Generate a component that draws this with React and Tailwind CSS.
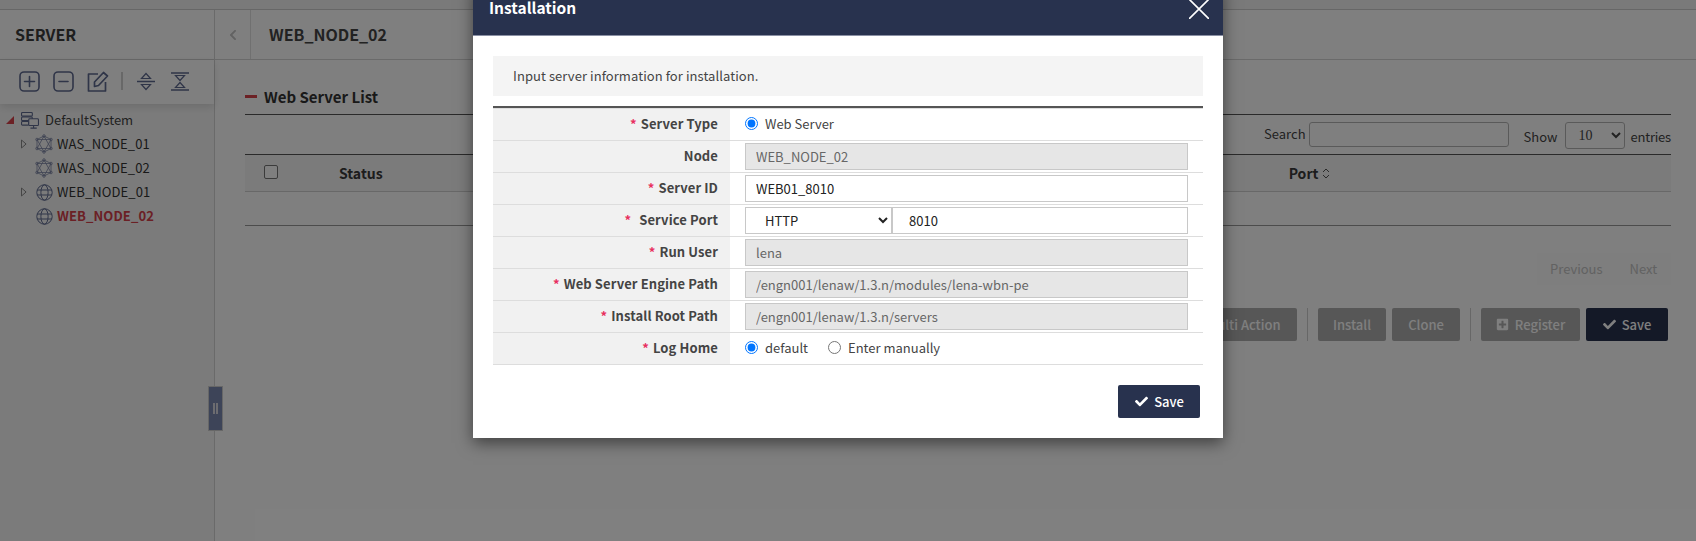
import React from "react";
import { FaCheck, FaPlusSquare, FaChevronLeft } from "react-icons/fa";

const ICON = "#5f6a90";

function SquareIcon({ children }) {
  return (
    <svg width="21" height="21" viewBox="0 0 21 21" fill="none" stroke={ICON} strokeWidth="1.6" strokeLinecap="round">
      <rect x="1" y="1" width="19" height="19" rx="4" />
      {children}
    </svg>
  );
}

function EditIcon() {
  return (
    <svg width="22" height="21" viewBox="0 0 22 21" fill="none" stroke={ICON} strokeWidth="1.7" strokeLinejoin="round">
      <path d="M11 3H1.5v17h17v-9" />
      <path d="M7.5 11 16.5 1.5l4 3.5-9 9.5-4 1z" />
    </svg>
  );
}

function SpreadIcon() {
  return (
    <svg width="20" height="19" viewBox="0 0 20 19" fill="none" stroke={ICON} strokeWidth="1.2">
      <path d="M1 9.5h18" strokeWidth="1.5" />
      <path d="M10 1.5l4.5 5h-9z" />
      <path d="M10 17.5l4.5-5h-9z" />
    </svg>
  );
}

function HourglassIcon() {
  return (
    <svg width="20" height="19" viewBox="0 0 20 19" fill="none" stroke={ICON} strokeWidth="1.2">
      <path d="M1 1h18M1 18h18" strokeWidth="1.5" />
      <path d="M10 8.5L5.5 3.5h9z" />
      <path d="M10 10.5l4.5 5h-9z" />
    </svg>
  );
}

function ServerIcon() {
  return (
    <svg width="20" height="19" viewBox="0 0 20 19" fill="none" stroke={ICON} strokeWidth="1.2">
      <rect x="0.6" y="0.6" width="12" height="4" rx="1" />
      <rect x="0.6" y="5.6" width="12" height="4" rx="1" />
      <rect x="0.6" y="10.6" width="8" height="4" rx="1" />
      <rect x="8.6" y="7.6" width="10.8" height="7.5" rx="1" fill="#f7f7f7" />
      <path d="M14 15v2.5M10.5 18h7" />
    </svg>
  );
}

function WasIcon() {
  return (
    <svg width="18" height="20" viewBox="0 0 18 20" fill="none" stroke="#7d86a6" strokeWidth="0.8">
      <path d="M9 2 16 14.5H2z" />
      <path d="M9 18 2 5.5h14z" />
      <circle cx="9" cy="2" r="1.3" />
      <circle cx="9" cy="18" r="1.3" />
      <circle cx="2" cy="5.5" r="1.3" />
      <circle cx="16" cy="5.5" r="1.3" />
      <circle cx="2" cy="14.5" r="1.3" />
      <circle cx="16" cy="14.5" r="1.3" />
      <path d="M9 2 16 5.5v9L9 18 2 14.5v-9z" />
    </svg>
  );
}

function GlobeIcon() {
  return (
    <svg width="17" height="17" viewBox="0 0 17 17" fill="none" stroke={ICON} strokeWidth="1">
      <circle cx="8.5" cy="8.5" r="7.7" />
      <ellipse cx="8.5" cy="8.5" rx="3.6" ry="7.7" />
      <path d="M1 6h15M1 11h15" />
    </svg>
  );
}

function TreeRow({ label, icon, arrow, active, indent }) {
  return (
    <div className="flex items-center h-6">
      <span className={indent ? "w-[35px] pl-[21px] flex items-center" : "w-[21px] pl-[6px] flex items-center"}>
        {arrow === "open" && (
          <svg width="8" height="8" viewBox="0 0 8 8"><path d="M8 0v8H0z" fill="#d9434a" /></svg>
        )}
        {arrow === "closed" && (
          <svg width="6" height="10" viewBox="0 0 6 10" fill="none" stroke="#8a8a8a"><path d="M0.5 1l4.6 4-4.6 4z" /></svg>
        )}
      </span>
      <span className="flex items-center w-[18px] h-6 justify-center shrink-0">{icon}</span>
      <span className={active ? "ml-1 text-[13px] tracking-[0.1px] font-bold text-[#d6404a]" : indent ? "ml-1 text-[13px] tracking-[0.1px] text-[#333]" : "ml-[6px] text-[13px] text-[#444]"}>{label}</span>
    </div>
  );
}

function FormRow({ label, required, children, wide }) {
  return (
    <div className="flex h-8 border-b border-[#dddddd]">
      <div className="w-[237px] shrink-0 bg-[#f1f1f1] flex items-center justify-end pr-3 pb-[2px] text-[13px] tracking-[0.1px] font-bold text-[#444]">
        {required && <span className={wide ? "text-[#e8305f] mr-[8px] font-bold" : "text-[#e8305f] mr-[4px] font-bold"}>*</span>}
        {label}
      </div>
      <div className="flex-1 flex items-center pl-[15px] pr-[15px]">{children}</div>
    </div>
  );
}

function Field({ value, disabled }) {
  return (
    <input
      readOnly
      value={value}
      className={
        disabled
          ? "w-full h-[27px] border border-[#c8c8c8] bg-[#e6e6e6] px-[10px] text-[13px] text-[#666] outline-none"
          : "w-full h-[27px] border border-[#c8c8c8] bg-white px-[10px] text-[13px] text-[#222] outline-none"
      }
    />
  );
}

function GrayButton({ children, className }) {
  return (
    <button className={"h-[33px] rounded-[2px] bg-[#aeaeae] text-white text-[13px] font-medium flex items-center justify-center " + className}>
      {children}
    </button>
  );
}

export default function App() {
  return (
    <div className="relative w-[1696px] h-[541px] overflow-hidden bg-white font-['Noto_Sans_CJK_KR','Noto_Sans',sans-serif]">
      <div className="h-[10px] bg-[#f4f4f4] border-b border-[#cfcfcf]" />
      <div className="flex h-[531px]">
        <aside className="relative w-[215px] shrink-0 border-r border-[#d4d4d4] bg-[#f7f7f7]">
          <div className="h-[50px] bg-white border-b border-[#cfcfcf] pl-[15px] pb-[2px] flex items-center text-base font-bold text-[#3c3c3c]">SERVER</div>
          <div className="h-[44px] bg-white shadow-[0_3px_8px_rgba(0,0,0,0.12)] flex items-center pl-[19px] pb-[2px]">
            <SquareIcon><path d="M10.5 5.5v10M5.5 10.5h10" /></SquareIcon>
            <span className="ml-[13px]"><SquareIcon><path d="M6 10.5h9" /></SquareIcon></span>
            <span className="ml-[13px]"><EditIcon /></span>
            <span className="ml-[12px] w-[2px] h-[18px] bg-[#d0d0d0]" />
            <span className="ml-[13px]"><SpreadIcon /></span>
            <span className="ml-[14px]"><HourglassIcon /></span>
          </div>
          <div className="pt-1">
            <TreeRow label="DefaultSystem" icon={<ServerIcon />} arrow="open" />
            <TreeRow label="WAS_NODE_01" icon={<WasIcon />} arrow="closed" indent />
            <TreeRow label="WAS_NODE_02" icon={<WasIcon />} indent />
            <TreeRow label="WEB_NODE_01" icon={<GlobeIcon />} arrow="closed" indent />
            <TreeRow label="WEB_NODE_02" icon={<GlobeIcon />} active indent />
          </div>
          <div className="absolute top-[376px] left-[208px] w-[15px] h-[45px] bg-[#7a88b0] border border-[#cfcfcf] flex items-center justify-center gap-px">
            <span className="w-[2px] h-[11px] bg-[#d8d8e0]" />
            <span className="w-[2px] h-[11px] bg-[#d8d8e0]" />
          </div>
        </aside>

        <main className="flex-1 min-w-0">
          <div className="h-[50px] border-b border-[#d4d4d4] flex items-center bg-white">
            <div className="w-[36px] h-full border-r border-[#e0e0e0] flex items-center justify-center text-[#c4c4c4] text-[12px]"><FaChevronLeft /></div>
            <div className="ml-[18px] pb-[2px] text-base font-bold text-[#444]">WEB_NODE_02</div>
          </div>

          <div className="pl-[30px] pr-[25px]">
            <div className="mt-[27px] h-[28px] flex items-center border-b border-[#555] pb-[9px]">
              <span className="w-3 h-[3px] bg-[#d9434a]" />
              <span className="ml-[7px] mt-[2px] text-[15px] font-bold text-[#333]">Web Server List</span>
            </div>

            <div className="h-[39px] flex justify-end pt-[7px] text-[13px] text-[#444]">
              <span className="mt-[2px]">Search</span>
              <input readOnly className="ml-[3px] w-[200px] h-[25px] border border-[#b5b5b5] rounded-[3px] bg-white" />
              <span className="ml-[15px] mt-[5px]">Show</span>
              <select className="ml-2 w-[60px] h-[27px] border border-[#b5b5b5] rounded-[3px] bg-white pl-2 text-sm font-['Liberation_Serif',serif]">
                <option>10</option>
              </select>
              <span className="ml-[5px] mt-[5px] tracking-[-0.2px]">entries</span>
            </div>

            <div className="h-[38px] border-t border-t-[#555] border-b border-b-[#d0d0d0] bg-[#f6f6f6] flex items-center text-sm font-bold text-[#3a3a3a]">
              <span className="ml-[19px] w-[14px] h-[14px] border border-[#777] rounded-[2px] bg-white -mt-[2px]" />
              <span className="ml-[61px]">Status</span>
              <span className="ml-[906px] flex items-center">
                Port
                <svg className="ml-1" width="8" height="11" viewBox="0 0 8 11" fill="none" stroke="#555" strokeWidth="1"><path d="M1 4l3-3 3 3M1 7l3 3 3-3" /></svg>
              </span>
            </div>
            <div className="h-[34px] border-b border-[#999]" />

            <div className="mt-[27px] flex justify-end text-[13px] text-[#c4c4c4]">
              <div className="h-[32px] w-[134px] bg-[#fcfcfc] flex items-center">
                <span className="ml-[13px]">Previous</span>
                <span className="ml-[27px]">Next</span>
              </div>
            </div>

            <div className="mt-[23px] flex justify-end items-center pr-[3px]">
              <GrayButton className="w-[107px]">Multi Action</GrayButton>
              <span className="mx-[10px] w-px h-[33px] bg-[#cfcfcf]" />
              <GrayButton className="w-[68px]">Install</GrayButton>
              <GrayButton className="w-[68px] ml-[6px]">Clone</GrayButton>
              <span className="mx-[10px] w-px h-[33px] bg-[#cfcfcf]" />
              <GrayButton className="w-[99px]">
                <FaPlusSquare className="mr-[6px] text-[13px]" />
                Register
              </GrayButton>
              <button className="ml-[6px] w-[82px] h-[33px] rounded-[2px] bg-[#28324e] text-white text-[13px] font-medium flex items-center justify-center">
                <FaCheck className="mr-[6px] text-[13px]" />
                Save
              </button>
            </div>
          </div>
        </main>
      </div>

      <div className="absolute inset-0 bg-black/50" />

      <div className="absolute left-[473px] -top-[17px] w-[750px] h-[455px] bg-white shadow-[0_5px_15px_rgba(0,0,0,0.5)]">
        <div className="h-[53px] bg-[#28324e] border-b border-[#8a90a4] relative flex items-center pl-[16px] text-[15.5px] font-bold text-white">
          <span className="-mt-[2px]">Installation</span>
          <svg className="absolute right-[14px] top-[16px]" width="20" height="20" viewBox="0 0 20 20" stroke="white" strokeWidth="1.6"><path d="M0 0l20 20M20 0L0 20" /></svg>
        </div>
        <div className="px-5 pt-5">
          <div className="h-10 bg-[#f4f4f4] flex items-center pl-[20px] text-[13px] tracking-[0.07px] text-[#444]">Input server information for installation.</div>
          <div className="mt-[10px] border-t-2 border-[#555]">
            <div className="h-px bg-[#dddddd]" />
            <FormRow label="Server Type" required>
              <label className="flex items-center text-[13px] text-[#444] pb-[2px]">
                <input type="radio" defaultChecked className="m-0 w-[13px] h-[13px]" />
                <span className="ml-[7px]">Web Server</span>
              </label>
            </FormRow>
            <FormRow label="Node"><Field value="WEB_NODE_02" disabled /></FormRow>
            <FormRow label="Server ID" required><Field value="WEB01_8010" /></FormRow>
            <FormRow label="Service Port" required wide>
              <div className="flex w-full">
                <select className="w-[147px] h-[27px] border border-[#c8c8c8] bg-white pl-[15px] text-[13px] text-[#222]">
                  <option>HTTP</option>
                </select>
                <input readOnly value="8010" className="flex-1 min-w-0 h-[27px] border border-[#c8c8c8] bg-white pl-4 text-[13px] text-[#222] outline-none" />
              </div>
            </FormRow>
            <FormRow label="Run User" required><Field value="lena" disabled /></FormRow>
            <FormRow label="Web Server Engine Path" required><Field value="/engn001/lenaw/1.3.n/modules/lena-wbn-pe" disabled /></FormRow>
            <FormRow label="Install Root Path" required><Field value="/engn001/lenaw/1.3.n/servers" disabled /></FormRow>
            <FormRow label="Log Home" required>
              <label className="flex items-center text-[13px] text-[#444] pb-[2px]">
                <input type="radio" name="log" defaultChecked className="m-0 w-[13px] h-[13px]" />
                <span className="ml-[7px]">default</span>
              </label>
              <label className="flex items-center text-[13px] text-[#444] ml-[20px] pb-[2px]">
                <input type="radio" name="log" className="m-0 w-[13px] h-[13px]" />
                <span className="ml-[7px]">Enter manually</span>
              </label>
            </FormRow>
          </div>
          <div className="mt-[20px] flex justify-end pr-[3px]">
            <button className="w-[82px] h-[33px] rounded-[2px] bg-[#28324e] text-white text-[13px] font-medium flex items-center justify-center pl-px">
              <FaCheck className="mr-[6px] text-[13px]" />
              Save
            </button>
          </div>
        </div>
      </div>
    </div>
  );
}
